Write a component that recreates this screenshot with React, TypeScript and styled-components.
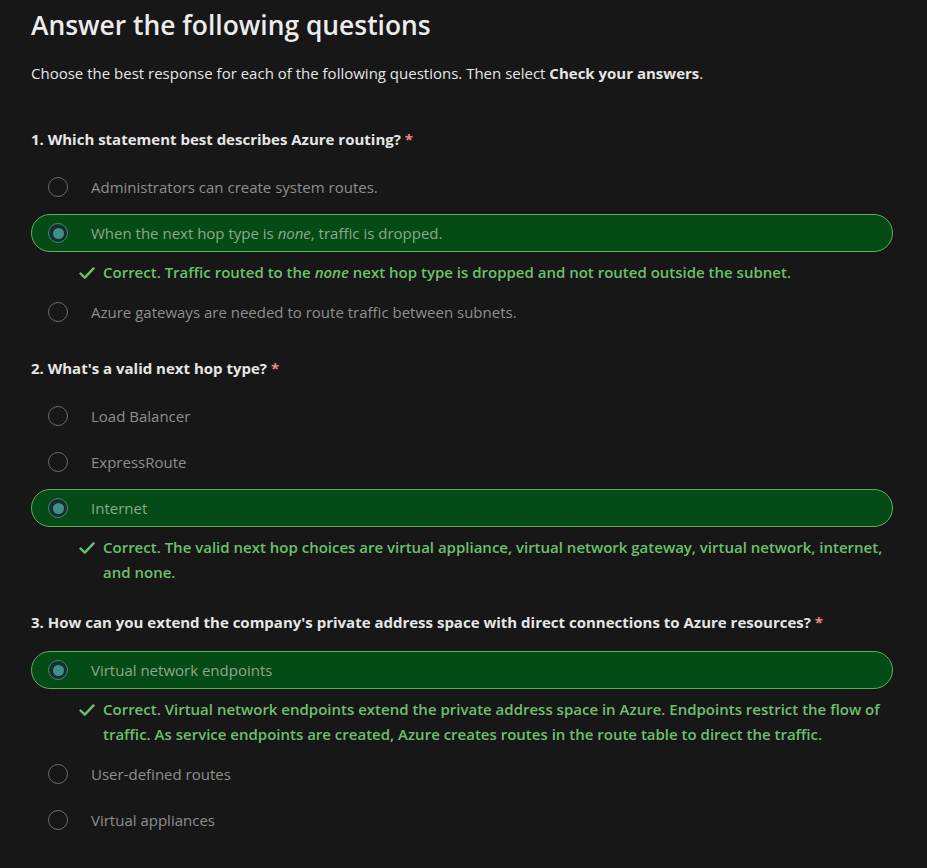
import React from "react";
import styled, { createGlobalStyle } from "styled-components";

const Global = createGlobalStyle`
  html, body { margin: 0; padding: 0; background: #171717; }
  body { font-family: "Open Sans", "Noto Sans", sans-serif; color: #e6e6e6; }
`;

const Page = styled.main`
  padding: 8px 34px 20px 31px;
  box-sizing: border-box;
  width: 927px;
`;

const Title = styled.h1`
  margin: 0;
  font-size: 26.4px;
  line-height: 34px;
  font-weight: 600;
  color: #ececec;
`;

const Intro = styled.p`
  margin: 19px 0 0;
  font-size: 15px;
  line-height: 24px;
  color: #e6e6e6;
  b { font-weight: 700; }
`;

const Question = styled.section`
  margin-top: 25px;
  &:first-of-type { margin-top: 42px; }
`;

const Heading = styled.h2`
  margin: 0 0 17px;
  font-size: 15px;
  line-height: 24px;
  font-weight: 700;
  color: #e6e6e6;
`;

const Star = styled.span`
  color: #e88a8a;
`;

const Options = styled.div`
  display: flex;
  flex-direction: column;
  gap: 8px;
`;

const Option = styled.div<{ $selected?: boolean }>`
  display: flex;
  align-items: center;
  height: 38px;
  box-sizing: border-box;
  padding-left: 16px;
  border-radius: 19px;
  border: 1px solid ${(p) => (p.$selected ? "#5fae5f" : "transparent")};
  background: ${(p) => (p.$selected ? "#054b16" : "transparent")};
  font-size: 15px;
  color: ${(p) => (p.$selected ? "#8aa88a" : "#8e8e8e")};
  em { font-style: italic; }
`;

const OptionLabel = styled.span``;

const Radio = styled.span<{ $checked?: boolean }>`
  width: 20px;
  height: 20px;
  box-sizing: border-box;
  border-radius: 50%;
  flex: none;
  margin-right: 23px;
  display: flex;
  align-items: center;
  justify-content: center;
  border: 1.5px solid ${(p) => (p.$checked ? "#3e8787" : "#6c6c6c")};
  background: ${(p) => (p.$checked ? "#16302a" : "transparent")};
  &::after {
    content: "";
    display: ${(p) => (p.$checked ? "block" : "none")};
    width: 11px;
    height: 11px;
    border-radius: 50%;
    background: #3f8f8f;
  }
`;

const Feedback = styled.div`
  display: flex;
  align-items: flex-start;
  padding-left: 48px;
  font-size: 15px;
  line-height: 25px;
  font-weight: 600;
  color: #6cc06c;
  em { font-style: italic; }
`;

const CheckIcon = styled.svg`
  flex: none;
  width: 16px;
  height: 14px;
  margin: 6px 8px 0 0;
`;

const FeedbackText = styled.span`
  flex: 1;
`;

const Check = () => (
  <CheckIcon viewBox="0 0 16 14" aria-hidden>
    <path d="M1.5 7.5 L5.8 11.6 L14.5 2.4" fill="none" stroke="#6cc06c" strokeWidth="2.4" strokeLinecap="round" strokeLinejoin="round" />
  </CheckIcon>
);

type Opt = { text: React.ReactNode; selected?: boolean; feedback?: React.ReactNode };
type Q = { title: string; options: Opt[] };

const questions: Q[] = [
  {
    title: "1. Which statement best describes Azure routing?",
    options: [
      { text: "Administrators can create system routes." },
      {
        text: (
          <>
            When the next hop type is <em>none</em>, traffic is dropped.
          </>
        ),
        selected: true,
        feedback: (
          <>
            Correct. Traffic routed to the <em>none</em> next hop type is dropped and not routed outside the subnet.
          </>
        ),
      },
      { text: "Azure gateways are needed to route traffic between subnets." },
    ],
  },
  {
    title: "2. What's a valid next hop type?",
    options: [
      { text: "Load Balancer" },
      { text: "ExpressRoute" },
      {
        text: "Internet",
        selected: true,
        feedback:
          "Correct. The valid next hop choices are virtual appliance, virtual network gateway, virtual network, internet, and none.",
      },
    ],
  },
  {
    title: "3. How can you extend the company's private address space with direct connections to Azure resources?",
    options: [
      {
        text: "Virtual network endpoints",
        selected: true,
        feedback:
          "Correct. Virtual network endpoints extend the private address space in Azure. Endpoints restrict the flow of traffic. As service endpoints are created, Azure creates routes in the route table to direct the traffic.",
      },
      { text: "User-defined routes" },
      { text: "Virtual appliances" },
    ],
  },
];

export default function App() {
  return (
    <>
      <Global />
      <Page>
        <Title>Answer the following questions</Title>
        <Intro>
          Choose the best response for each of the following questions. Then select <b>Check your answers</b>.
        </Intro>
        {questions.map((q) => (
          <Question key={q.title}>
            <Heading>
              {q.title} <Star>*</Star>
            </Heading>
            <Options>
              {q.options.map((o, i) => (
                <React.Fragment key={i}>
                  <Option $selected={o.selected}>
                    <Radio $checked={o.selected} />
                    <OptionLabel>{o.text}</OptionLabel>
                  </Option>
                  {o.feedback && (
                    <Feedback>
                      <Check />
                      <FeedbackText>{o.feedback}</FeedbackText>
                    </Feedback>
                  )}
                </React.Fragment>
              ))}
            </Options>
          </Question>
        ))}
      </Page>
    </>
  );
}
